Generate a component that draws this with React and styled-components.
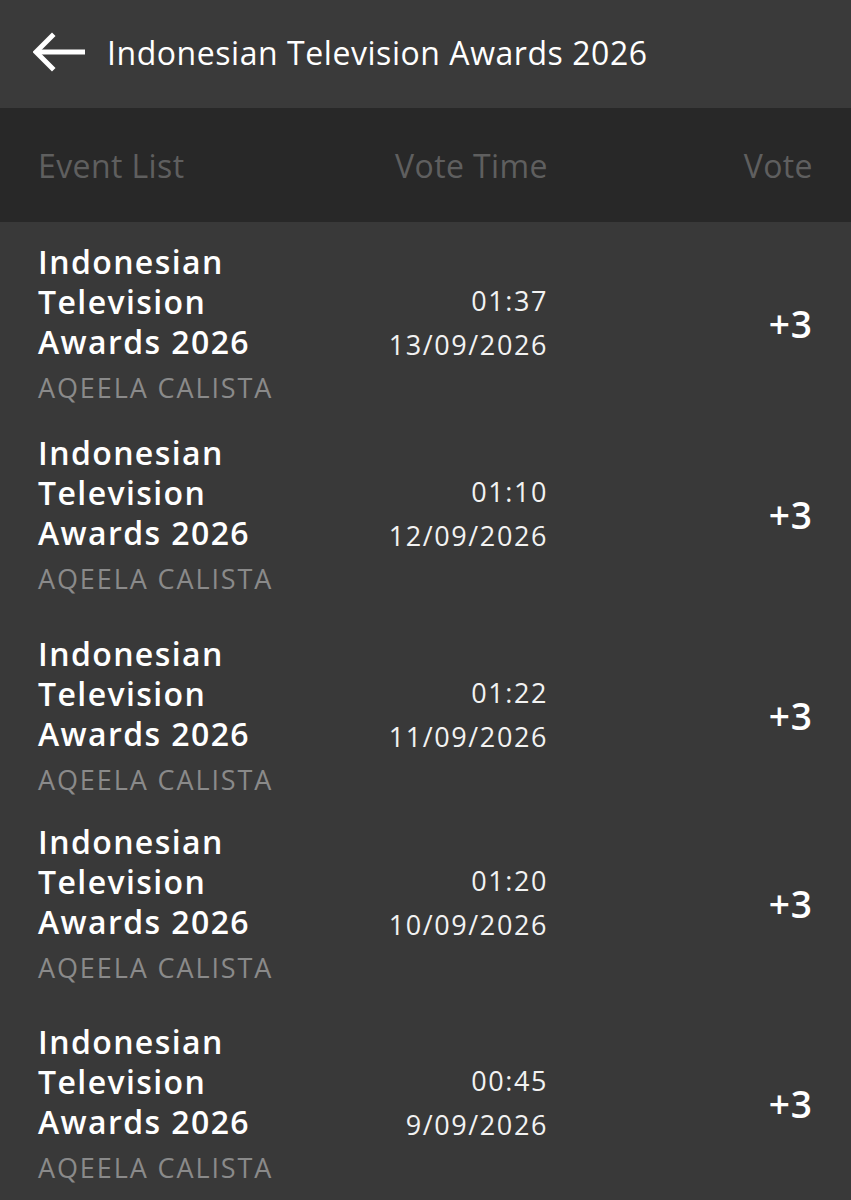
import React from 'react';
import styled, { createGlobalStyle } from 'styled-components';

const votes = [
  { id: 1, time: '01:37', date: '13/09/2026', gap: 3 },
  { id: 2, time: '01:10', date: '12/09/2026', gap: 13 },
  { id: 3, time: '01:22', date: '11/09/2026', gap: 0 },
  { id: 4, time: '01:20', date: '10/09/2026', gap: 12 },
  { id: 5, time: '00:45', date: '9/09/2026', gap: 3 },
];

const GlobalStyle = createGlobalStyle`
  html, body {
    margin: 0;
    padding: 0;
    background: #393939;
  }
  body {
    font-family: "Open Sans", "Noto Sans", sans-serif;
    color: #fff;
  }
`;

const Page = styled.div`
  width: 851px;
  min-height: 1200px;
  overflow: hidden;
  background: #393939;
`;

const TopBar = styled.header`
  height: 108px;
  display: flex;
  align-items: center;
  padding: 0 0 4px 33px;
  gap: 20px;
  background: #3a3a3a;
  box-sizing: border-box;
`;

const BackButton = styled.button`
  border: none;
  background: none;
  padding: 0;
  width: 54px;
  height: 40px;
  display: flex;
  align-items: center;
  cursor: pointer;
`;

const Title = styled.h1`
  margin: 0;
  font-size: 32px;
  font-weight: 400;
  color: #fff;
  letter-spacing: 0.55px;
`;

const HeadRow = styled.div`
  height: 114px;
  display: grid;
  grid-template-columns: 1fr 240px 265px;
  align-items: center;
  padding: 0 38px 0 38px;
  background: #282828;
  box-sizing: border-box;
`;

const HeadCell = styled.div`
  font-size: 32px;
  font-weight: 500;
  color: #5f5f5f;
  text-align: ${(p) => p.$align || 'left'};
  letter-spacing: 0.4px;
`;

const Row = styled.div`
  display: grid;
  grid-template-columns: 1fr 240px 265px;
  align-items: center;
  padding: 20px 38px ${(p) => p.$gap}px 38px;
`;

const EventName = styled.div`
  font-size: 32px;
  font-weight: 600;
  line-height: 40px;
  width: 250px;
  color: #fff;
  letter-spacing: 1.4px;
`;

const Artist = styled.div`
  margin-top: 4px;
  font-size: 27px;
  line-height: 44px;
  color: #8a8a8a;
  letter-spacing: 1.9px;
`;

const TimeCell = styled.div`
  text-align: right;
  font-size: 27px;
  line-height: 44px;
  color: #f2f2f2;
  letter-spacing: 1.6px;
  padding-bottom: 6px;
`;

const VoteCell = styled.div`
  text-align: right;
  font-size: 37px;
  font-weight: 600;
  color: #fff;
  letter-spacing: 1px;
  padding-bottom: 6px;
`;

const BackArrow = () => (
  <svg width="54" height="40" viewBox="0 0 54 40" fill="none">
    <path d="M4 20 H52" stroke="#fff" strokeWidth="5" />
    <path d="M19 4 L3 20 L19 36" stroke="#fff" strokeWidth="5" strokeLinecap="square" strokeLinejoin="miter" />
  </svg>
);

export default function App() {
  return (
    <Page>
      <GlobalStyle />
      <TopBar>
        <BackButton aria-label="Back">
          <BackArrow />
        </BackButton>
        <Title>Indonesian Television Awards 2026</Title>
      </TopBar>
      <HeadRow>
        <HeadCell>Event List</HeadCell>
        <HeadCell $align="right">Vote Time</HeadCell>
        <HeadCell $align="right">Vote</HeadCell>
      </HeadRow>
      {votes.map((v) => (
        <Row key={v.id} $gap={v.gap}>
          <div>
            <EventName>Indonesian Television Awards 2026</EventName>
            <Artist>AQEELA CALISTA</Artist>
          </div>
          <TimeCell>
            {v.time}
            <br />
            {v.date}
          </TimeCell>
          <VoteCell>+3</VoteCell>
        </Row>
      ))}
    </Page>
  );
}
